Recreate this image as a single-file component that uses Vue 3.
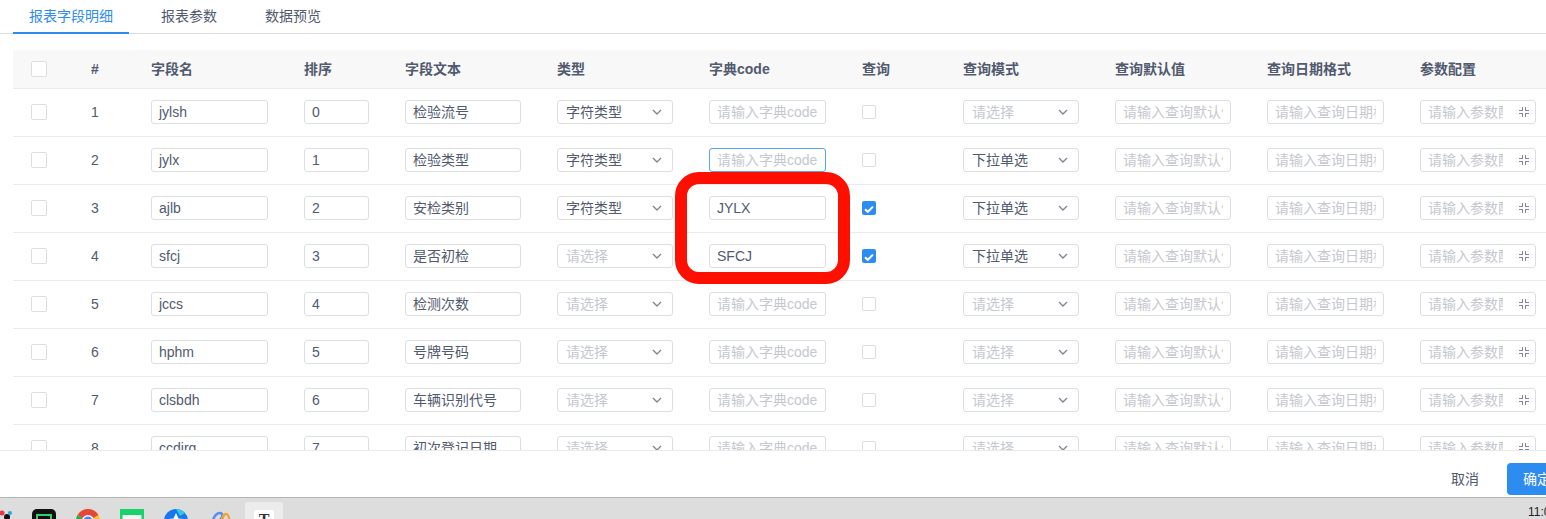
<template>
  <div class="page">
    <div class="tabs">
      <div v-for="(t, i) in tabs" :key="t" class="tab" :class="{ active: i === 0 }">{{ t }}</div>
    </div>

    <div class="table-wrap">
      <div class="row head">
        <div class="cell"><span class="check"></span></div>
        <div v-for="h in headers" :key="h" class="cell">{{ h }}</div>
      </div>

      <div v-for="(r, i) in rows" :key="r.name" class="row">
        <div class="cell"><span class="check"></span></div>
        <div class="cell">{{ i + 1 }}</div>
        <div class="cell"><div class="input w117">{{ r.name }}</div></div>
        <div class="cell"><div class="input w65">{{ i }}</div></div>
        <div class="cell"><div class="input w116">{{ r.text }}</div></div>
        <div class="cell">
          <div class="input w116 select" :class="{ ph: !r.type }">
            <span>{{ r.type || '请选择' }}</span>
            <svg class="arrow" viewBox="0 0 10 6" width="10" height="6"><path d="M1 1l4 4 4-4" fill="none" stroke="#808695" stroke-width="1.4" /></svg>
          </div>
        </div>
        <div class="cell">
          <div class="input w117" :class="{ ph: !r.code, focus: i === 1 }">{{ r.code || '请输入字典code' }}</div>
        </div>
        <div class="cell">
          <span class="check small" :class="{ on: r.query }">
            <svg v-if="r.query" viewBox="0 0 14 14" width="14" height="14"><path d="M3 7.2l2.800 2.600L11 4.600" fill="none" stroke="#fff" stroke-width="2" /></svg>
          </span>
        </div>
        <div class="cell">
          <div class="input w116 select" :class="{ ph: !r.mode }">
            <span>{{ r.mode || '请选择' }}</span>
            <svg class="arrow" viewBox="0 0 10 6" width="10" height="6"><path d="M1 1l4 4 4-4" fill="none" stroke="#808695" stroke-width="1.4" /></svg>
          </div>
        </div>
        <div class="cell"><div class="input w116 ph"><span class="clip-text">请输入查询默认值</span></div></div>
        <div class="cell"><div class="input w117 ph"><span class="clip-text">请输入查询日期格式</span></div></div>
        <div class="cell">
          <div class="input w116 ph param">
            <span class="clip-text short">请输入参数配置</span>
            <svg viewBox="0 0 12 12" width="12" height="12"><path d="M4.500 1v3.500H1M7.500 1v3.500H11M4.500 11V7.500H1M7.500 11V7.500H11" fill="none" stroke="#808695" stroke-width="1.100" /></svg>
          </div>
        </div>
      </div>
    </div>

    <div class="footer">
      <span class="cancel">取消</span>
      <span class="ok">确定</span>
    </div>

    <div class="taskbar">
      <div class="dock">
        <svg class="dock-icon first" viewBox="0 0 12 22"><circle cx="2" cy="4" r="2.500" fill="#e8344e" /><circle cx="7" cy="8" r="3" fill="#111" /><circle cx="10" cy="4" r="2" fill="#29a8e0" /></svg>
        <svg class="dock-icon" viewBox="0 0 24 22"><rect width="24" height="22" rx="5" fill="#111" /><rect x="5" y="6" width="14" height="16" fill="none" stroke="#2fd06f" stroke-width="2" /></svg>
        <svg class="dock-icon" viewBox="0 0 24 22">
          <circle cx="12" cy="12" r="12" fill="#f7c531" />
          <path d="M12 12L1.600 6A12 12 0 0 0 12 24z" fill="#34a853" />
          <path d="M12 12L1.600 6A12 12 0 0 1 22.400 6z" fill="#e5483b" />
          <circle cx="12" cy="12" r="6" fill="#fff" />
          <circle cx="12" cy="12" r="4.500" fill="#4285f4" />
        </svg>
        <svg class="dock-icon" viewBox="0 0 24 22"><rect width="24" height="22" fill="#18d36a" /><rect x="2.500" y="6" width="19" height="16" fill="#f4f4f4" /></svg>
        <svg class="dock-icon" viewBox="0 0 24 22">
          <circle cx="12" cy="12" r="12" fill="#1677ef" />
          <path d="M12 0a12 12 0 0 1 9 4l-5 3z" fill="#35c5e8" />
          <path d="M12 4l2.500 5.500 6 .6-4.500 4 1.400 6-5.400-3.100-5.400 3.100 1.400-6-4.500-4 6-.6z" fill="#fff" />
        </svg>
        <svg class="dock-icon" viewBox="0 0 24 22"><path d="M3 22C3 12 7 4 12 4c3 0 3 4 0 7" fill="none" stroke="#5b8def" stroke-width="2.500" /><path d="M13 22c0-10 2-17 5-17s4 8 4 17" fill="none" stroke="#eda72a" stroke-width="2.500" /></svg>
        <div class="active-app"><span class="t-box">T</span></div>
      </div>
      <span class="clock">11:00</span>
    </div>

    <div class="mark"></div>
  </div>
</template>

<script setup>
const tabs = ['报表字段明细', '报表参数', '数据预览']
const headers = ['#', '字段名', '排序', '字段文本', '类型', '字典code', '查询', '查询模式', '查询默认值', '查询日期格式', '参数配置']
const rows = [
  { name: 'jylsh', text: '检验流号', type: '字符类型' },
  { name: 'jylx', text: '检验类型', type: '字符类型', mode: '下拉单选' },
  { name: 'ajlb', text: '安检类别', type: '字符类型', code: 'JYLX', query: true, mode: '下拉单选' },
  { name: 'sfcj', text: '是否初检', code: 'SFCJ', query: true, mode: '下拉单选' },
  { name: 'jccs', text: '检测次数' },
  { name: 'hphm', text: '号牌号码' },
  { name: 'clsbdh', text: '车辆识别代号' },
  { name: 'ccdjrq', text: '初次登记日期' }
]
</script>

<style>
html, body { margin: 0; background: #fff; overflow: hidden; }
</style>

<style scoped>
.page {
  position: relative;
  width: 1546px;
  height: 519px;
  overflow: hidden;
  background: #fff;
  color: #515a6e;
  font: 14px/20px "Liberation Sans", "Noto Sans CJK SC", sans-serif;
}
.tabs {
  display: flex;
  gap: 16px;
  height: 34px;
  margin-bottom: 16px;
  padding-left: 13px;
  border-bottom: 1px solid #dcdee2;
  box-sizing: border-box;
}
.tab {
  height: 34px;
  padding: 0 16px;
  line-height: 32px;
  box-sizing: border-box;
}
.tab.active {
  color: #2d8cf0;
  border-bottom: 2px solid #2d8cf0;
}
.table-wrap {
  height: 400px;
  margin-left: 13px;
  overflow: hidden;
}
.row {
  display: grid;
  grid-template-columns: 78px 60px 153px 101px 152px 152px 153px 101px 152px 152px 153px 126px;
  height: 48px;
  padding-bottom: 1px;
  align-items: center;
  border-bottom: 1px solid #e8eaec;
  box-sizing: border-box;
}
.row.head {
  height: 39px;
  padding-bottom: 0;
  background: #f8f8f9;
  font-weight: 700;
}
.cell {
  min-width: 0;
  white-space: nowrap;
}
.cell:first-child { padding-left: 18px; }
.check {
  display: block;
  width: 14px;
  height: 14px;
  border: 1px solid #dcdee2;
  border-radius: 2px;
  background: #fff;
}
.check.small {
  width: 12px;
  height: 12px;
}
.check.on {
  width: 14px;
  height: 14px;
  border: 0;
  background: #2d8cf0;
}
.input {
  height: 24px;
  padding: 0 7px;
  border: 1px solid #dcdee2;
  border-radius: 3px;
  box-sizing: border-box;
  line-height: 22px;
  background: #fff;
  overflow: hidden;
}
.w117 { width: 117px; }
.w116 { width: 116px; }
.w65 { width: 65px; }
.ph { color: #c5c8ce; }
.focus { border-color: #57a3f3; }
.select {
  display: flex;
  align-items: center;
  justify-content: space-between;
  padding-right: 10px;
  padding-left: 8px;
}
.arrow { flex: none; }
.clip-text {
  display: block;
  overflow: hidden;
}
.clip-text.short { width: 75px; }
.param {
  display: flex;
  align-items: center;
  justify-content: space-between;
  padding-right: 5px;
}
.footer {
  height: 47px;
  box-sizing: border-box;
  border-top: 1px solid #e8eaec;
  position: relative;
}
.cancel {
  position: absolute;
  left: 1451px;
  top: 18px;
}
.ok {
  position: absolute;
  left: 1507px;
  top: 12px;
  width: 60px;
  height: 32px;
  padding-left: 16px;
  box-sizing: border-box;
  line-height: 32px;
  border-radius: 4px;
  background: #2d8cf0;
  color: #fff;
}
.taskbar {
  display: flex;
  justify-content: space-between;
  height: 22px;
  background: #dddddd;
  border-top: 1px solid #b4b4b4;
  box-sizing: border-box;
}
.dock {
  display: flex;
  align-items: flex-start;
}
.dock-icon {
  flex: none;
  width: 24px;
  height: 22px;
  margin: 11px 20px 0 0;
}
.dock-icon.first { width: 12px; }
.active-app {
  width: 38px;
  height: 22px;
  margin-top: 4px;
  margin-left: -7px;
  background: #ececec;
  border-radius: 3px 3px 0 0;
  display: flex;
  justify-content: center;
}
.t-box {
  margin-top: 8px;
  width: 20px;
  height: 20px;
  background: #fff;
  border-radius: 3px;
  text-align: center;
  font: 700 16px/20px "Liberation Serif", serif;
  color: #333;
}
.clock {
  color: #222;
  font-size: 12px;
  line-height: 28px;
  width: 18px;
}
.mark {
  position: absolute;
  left: 675px;
  top: 172px;
  width: 175px;
  height: 112px;
  border: 12px solid #fe0f00;
  border-radius: 24px;
  box-sizing: border-box;
}
</style>
